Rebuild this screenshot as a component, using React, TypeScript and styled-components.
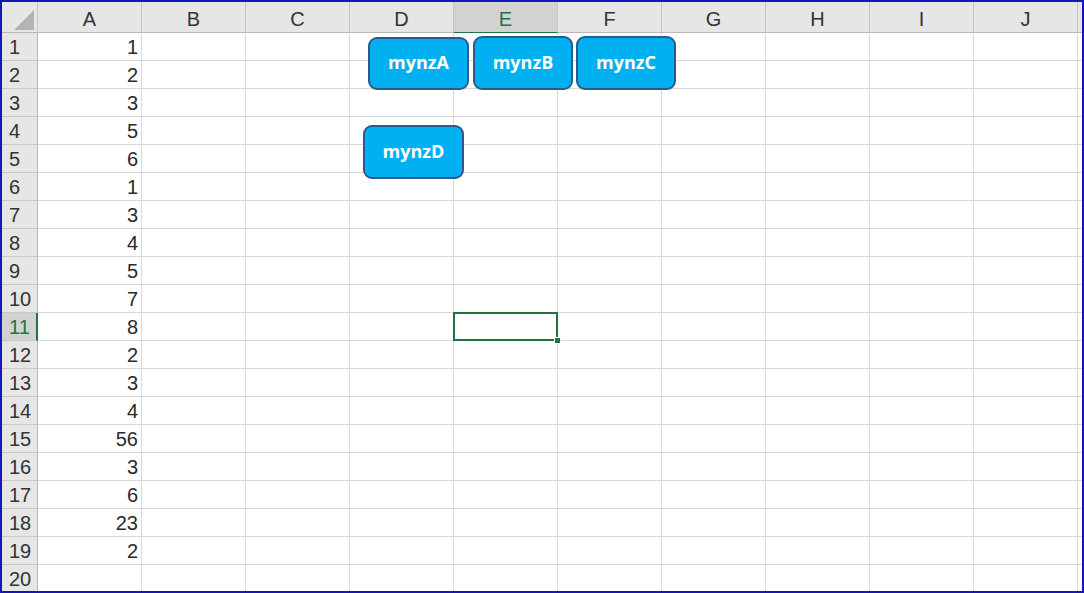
import React from 'react';
import styled, { createGlobalStyle, css } from 'styled-components';

const GlobalStyle = createGlobalStyle`
  html, body {
    margin: 0;
    padding: 0;
    background: #fff;
  }
  * {
    box-sizing: border-box;
  }
`;

const columns = ['A', 'B', 'C', 'D', 'E', 'F', 'G', 'H', 'I', 'J'];
const values = [1, 2, 3, 5, 6, 1, 3, 4, 5, 7, 8, 2, 3, 4, 56, 3, 6, 23, 2, null];
const selCol = 'E';
const selRow = 11;

const shapes = [
  { label: 'mynzA', left: 366, top: 35, width: 101, height: 53 },
  { label: 'mynzB', left: 471, top: 34, width: 100, height: 54 },
  { label: 'mynzC', left: 574, top: 34, width: 100, height: 54 },
  { label: 'mynzD', left: 361, top: 123, width: 101, height: 54 },
];

const Frame = styled.div`
  position: relative;
  width: 1084px;
  height: 593px;
  border: 2px solid #1616b8;
  overflow: hidden;
  background: #fff;
  font-family: 'Liberation Sans', Arial, sans-serif;
`;

const Sheet = styled.div`
  display: grid;
  grid-template-columns: 36px repeat(10, 104px) 1fr;
  grid-template-rows: 31px repeat(20, 28px);
`;

const Corner = styled.div`
  background: #e6e6e6;
  border-right: 1px solid #c6c6c6;
  border-bottom: 1px solid #b8b8b8;
  display: flex;
  align-items: flex-end;
  justify-content: flex-end;
  padding: 0 3px 2px 0;
`;

const ColHead = styled.div<{ $active?: boolean }>`
  background: ${(p) => (p.$active ? '#d2d2d2' : '#e6e6e6')};
  border-right: 1px solid #c6c6c6;
  border-bottom: 1px solid ${(p) => (p.$active ? '#217346' : '#b8b8b8')};
  color: ${(p) => (p.$active ? '#217346' : '#333')};
  font-size: 20px;
  display: flex;
  align-items: center;
  justify-content: center;
  padding-top: 4px;
`;

const RowHead = styled.div<{ $active?: boolean }>`
  background: ${(p) => (p.$active ? '#d2d2d2' : '#e6e6e6')};
  border-bottom: 1px solid #c6c6c6;
  ${(p) =>
    p.$active
      ? css`
          border-right: 2px solid #217346;
          color: #217346;
        `
      : css`
          border-right: 1px solid #b8b8b8;
          color: #333;
        `}
  font-size: 20px;
  display: flex;
  align-items: center;
  padding: 2px 0 0 7px;
`;

const Cell = styled.div<{ $selected?: boolean }>`
  position: relative;
  border-right: 1px solid #d9d9d9;
  border-bottom: 1px solid #d9d9d9;
  font-size: 20px;
  color: #2a2a2a;
  display: flex;
  align-items: center;
  justify-content: flex-end;
  padding: 2px 3px 0 0;
  z-index: ${(p) => (p.$selected ? 2 : 0)};
`;

const EdgeHead = styled.div`
  background: #e6e6e6;
  border-bottom: 1px solid #b8b8b8;
`;

const EdgeCell = styled.div`
  border-bottom: 1px solid #d9d9d9;
`;

const Selection = styled.div`
  position: absolute;
  top: -1px;
  left: -1px;
  right: -1px;
  bottom: -1px;
  border: 2px solid #217346;
`;

const Handle = styled.div`
  position: absolute;
  right: -5px;
  bottom: -5px;
  width: 7px;
  height: 7px;
  background: #217346;
  border: 1px solid #fff;
`;

const Shape = styled.div`
  position: absolute;
  display: flex;
  align-items: center;
  justify-content: center;
  padding-bottom: 3px;
  background: #00b0f0;
  border: 2px solid #2c5a8c;
  border-radius: 9px;
  color: #fff;
  font-family: 'Open Sans', 'Liberation Sans', sans-serif;
  font-weight: 700;
  font-size: 18px;
  z-index: 3;
`;

export default function App() {
  return (
    <>
      <GlobalStyle />
      <Frame>
        <Sheet>
          <Corner>
            <svg width="20" height="20" viewBox="0 0 20 20">
              <polygon points="20,0 20,20 0,20" fill="#b4b4b4" />
            </svg>
          </Corner>
          {columns.map((c) => (
            <ColHead key={c} $active={c === selCol}>
              {c}
            </ColHead>
          ))}
          <EdgeHead />
          {values.map((v, i) => {
            const row = i + 1;
            return (
              <React.Fragment key={row}>
                <RowHead $active={row === selRow}>{row}</RowHead>
                {columns.map((c) => {
                  const selected = c === selCol && row === selRow;
                  return (
                    <Cell key={c} $selected={selected}>
                      {c === 'A' && v !== null ? v : null}
                      {selected && (
                        <Selection>
                          <Handle />
                        </Selection>
                      )}
                    </Cell>
                  );
                })}
                <EdgeCell />
              </React.Fragment>
            );
          })}
        </Sheet>
        {shapes.map((s) => (
          <Shape
            key={s.label}
            style={{ left: s.left, top: s.top, width: s.width, height: s.height }}
          >
            {s.label}
          </Shape>
        ))}
      </Frame>
    </>
  );
}
